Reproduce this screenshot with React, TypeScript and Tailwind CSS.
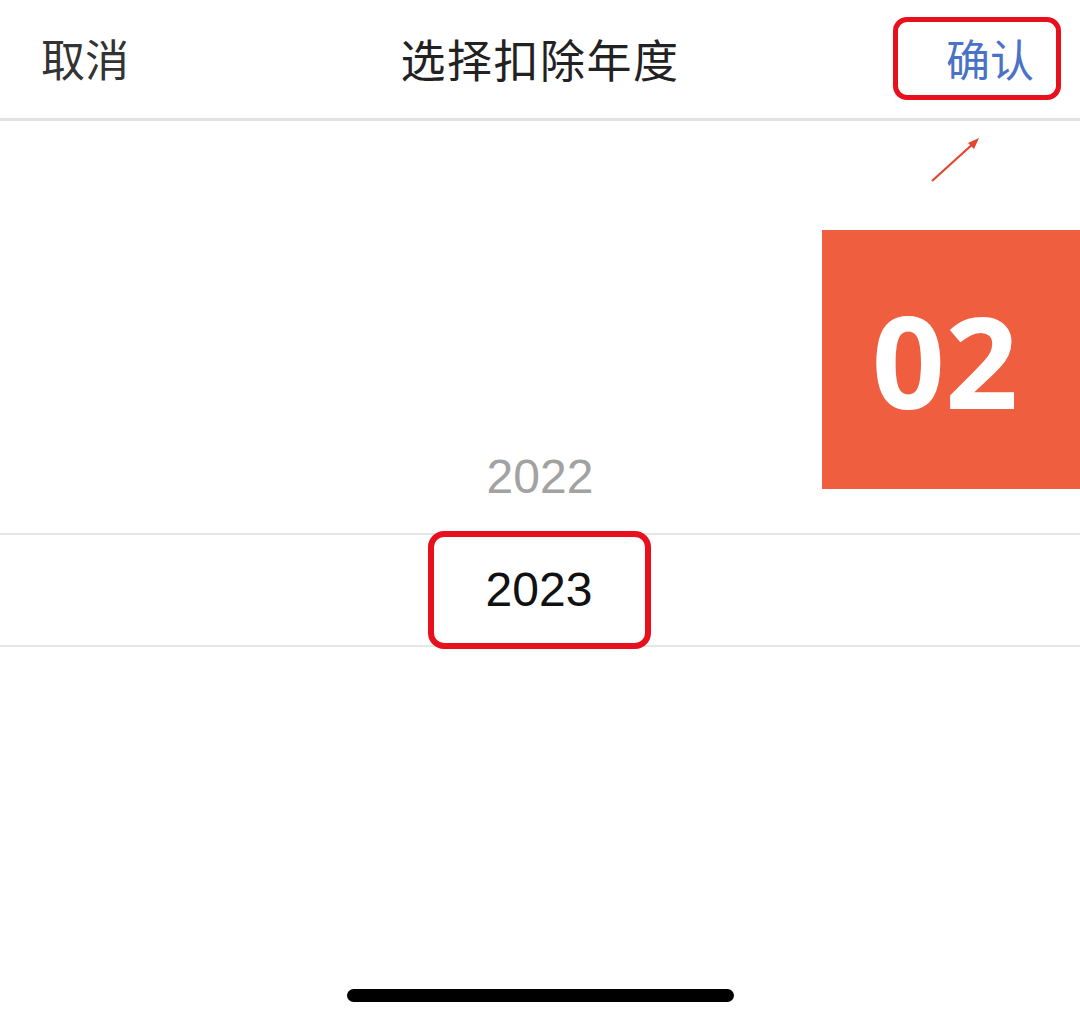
import React from "react";

const cjk = { fontFamily: '"Noto Sans CJK SC", "Noto Sans", sans-serif' };
const num = { fontFamily: '"Liberation Sans", Arial, sans-serif' };

export default function App() {
  return (
    <div className="relative w-[1080px] h-[1018px] bg-white overflow-hidden flex flex-col">
      {/* Header */}
      <div className="relative h-[121px] flex items-center justify-between border-b-[3px] border-[#e2e2e2] shrink-0" style={cjk}>
        <div className="pl-[41px] text-[44px] text-[#333] leading-none pb-[2px]">取消</div>
        <div className="absolute left-0 right-0 top-0 h-full flex items-center justify-center pointer-events-none">
          <div className="text-[45px] text-[#222] leading-none tracking-[1.5px] pb-[2px]">选择扣除年度</div>
        </div>
        <div className="mr-[19px] mt-[-2px] w-[168px] h-[83px] border-[5px] border-[#e8101c] rounded-[14px] flex items-center justify-end pr-[22px]">
          <span className="text-[44px] text-[#4a72c6] leading-none">确认</span>
        </div>
      </div>

      {/* Body */}
      <div className="relative flex-1 flex flex-col">
        <div className="h-[312px]" />
        <div className="h-[100px] flex items-center justify-center pb-[12px]">
          <span className="text-[48px] text-[#a2a2a2] leading-none" style={num}>2022</span>
        </div>
        <div className="h-[114px] border-t-2 border-b-2 border-[#e6e6e6] flex items-center justify-center">
          <div className="w-[223px] h-[118px] ml-[-2px] border-[6px] border-[#e8101c] rounded-[16px] flex items-center justify-center">
            <span className="text-[48px] text-[#111] leading-none" style={num}>2023</span>
          </div>
        </div>
        <div className="flex-1" />
        <div className="h-[29px] flex justify-center">
          <div className="w-[387px] h-[13px] rounded-full bg-black" />
        </div>

        {/* Annotation arrow */}
        <svg className="absolute left-[925px] top-[8px]" width="60" height="60" viewBox="0 0 60 60">
          <line x1="7" y1="52" x2="50" y2="13" stroke="#e5452c" strokeWidth="2.2" />
          <polygon points="54,9 43,14 49,20" fill="#e5452c" />
        </svg>

        {/* Step badge */}
        <div className="absolute left-[822px] top-[109px] w-[258px] h-[259px] bg-[#ee5e3f] flex items-center justify-center">
          <span className="text-[128px] font-bold text-white leading-none pr-[12px]" style={{ fontFamily: '"Open Sans", sans-serif' }}>02</span>
        </div>
      </div>
    </div>
  );
}
